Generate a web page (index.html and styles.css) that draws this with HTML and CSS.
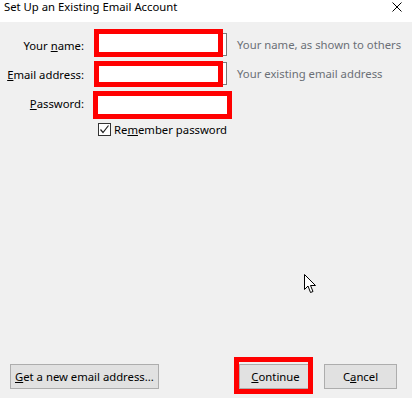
FILE: index.html
```html
<!DOCTYPE html>
<html lang="en">
<head>
  <meta charset="UTF-8">
  <title>Set Up an Existing Email Account</title>
  <link rel="stylesheet" href="styles.css">
</head>
<body>
  <div class="dialog">
    <div class="titlebar">
      <span class="title">Set Up an Existing Email Account</span>
      <svg class="close" width="10" height="10" viewBox="0 0 10 10">
        <path d="M0.5 0.5 L9.5 9.5 M9.5 0.5 L0.5 9.5" stroke="#000" stroke-width="1"/>
      </svg>
    </div>

    <div class="form">
      <label class="label">Your <u>n</u>ame:</label>
      <div class="field">
        <input class="input" type="text">
        <span class="mark mark-name"></span>
      </div>
      <span class="hint">Your name, as shown to others</span>

      <label class="label"><u>E</u>mail address:</label>
      <div class="field">
        <input class="input" type="text">
        <span class="mark mark-email"></span>
      </div>
      <span class="hint">Your existing email address</span>

      <label class="label"><u>P</u>assword:</label>
      <div class="field">
        <input class="input input-focus" type="password">
        <span class="mark mark-password"></span>
      </div>
      <span class="hint"></span>

      <span></span>
      <div class="remember">
        <span class="checkbox">
          <svg width="11" height="11" viewBox="0 0 11 11">
            <path d="M1.5 5.5 L4 8.5 L9.5 1.5" fill="none" stroke="#222" stroke-width="1.2"/>
          </svg>
        </span>
        <span>Re<u>m</u>ember password</span>
      </div>
    </div>

    <div class="spacer">
      <svg class="cursor" width="13" height="20" viewBox="0 0 13 20">
        <path d="M0.5 0.5 L0.5 15.5 L4 12 L6.5 18.5 L9 17.5 L6.5 11.5 L11.5 11.5 Z" fill="#fff" stroke="#000" stroke-width="1"/>
      </svg>
    </div>

    <div class="footer">
      <button class="btn btn-wide"><u>G</u>et a new email address...</button>
      <div class="actions">
        <div class="field">
          <button class="btn"><u>C</u>ontinue</button>
          <span class="mark mark-continue"></span>
        </div>
        <button class="btn">C<u>a</u>ncel</button>
      </div>
    </div>
  </div>
</body>
</html>
```

FILE: styles.css
```css
* {
  margin: 0;
  padding: 0;
  box-sizing: border-box;
}

body {
  font-family: 'Noto Sans', 'Liberation Sans', sans-serif;
  font-size: 11.3px;
  color: #000;
  background: #f0f0f0;
}

.dialog {
  height: 398px;
  display: flex;
  flex-direction: column;
}

.titlebar {
  height: 22px;
  background: #fff;
  display: flex;
  justify-content: space-between;
  align-items: flex-start;
  padding: 0 10px 0 4px;
}

.title {
  line-height: 14px;
  white-space: nowrap;
}

.close {
  margin-top: 2px;
}

.form {
  display: grid;
  grid-template-columns: 84px 133px 1fr;
  grid-template-rows: 23px 23px 23px 16px;
  column-gap: 10px;
  row-gap: 6px;
  padding-top: 11px;
  align-items: center;
  white-space: nowrap;
}

.label {
  text-align: right;
  padding-top: 1px;
}

.field {
  position: relative;
  height: 23px;
}

.input {
  width: 100%;
  height: 23px;
  border: 1px solid #7a7a7a;
  background: #fff;
  outline: none;
}

.input-focus {
  border-color: #0078d7;
}

.hint {
  color: #6b6f76;
}

.mark {
  position: absolute;
  border: 5px solid #ff0000;
  background: #fff;
}

.mark-name {
  left: 0;
  top: -4px;
  width: 129px;
  height: 28px;
}

.mark-email {
  left: 0;
  top: -1px;
  width: 129px;
  height: 26px;
}

.mark-password {
  left: -1px;
  top: 0;
  width: 139px;
  height: 28px;
}

.remember {
  grid-column: 2 / 4;
  display: flex;
  align-items: center;
  gap: 3px;
  padding-left: 4px;
  margin-top: 2px;
}

.checkbox {
  width: 13px;
  height: 13px;
  border: 1px solid #333;
  background: #fff;
  display: flex;
  align-items: center;
  justify-content: center;
}

.spacer {
  flex: 1;
  position: relative;
}

.cursor {
  position: absolute;
  left: 304px;
  top: 138px;
}

.footer {
  display: flex;
  justify-content: space-between;
  padding: 0 15px 9px 10px;
}

.actions {
  display: flex;
  gap: 12px;
}

.btn {
  font-family: inherit;
  font-size: 11.3px;
  color: #000;
  height: 25px;
  width: 73px;
  background: #e1e1e1;
  border: 1px solid #adadad;
  white-space: nowrap;
}

.btn-wide {
  width: 149px;
  text-align: left;
  padding-left: 4px;
}

.mark-continue {
  left: -5px;
  top: -7px;
  width: 79px;
  height: 37px;
  background: transparent;
}
```
